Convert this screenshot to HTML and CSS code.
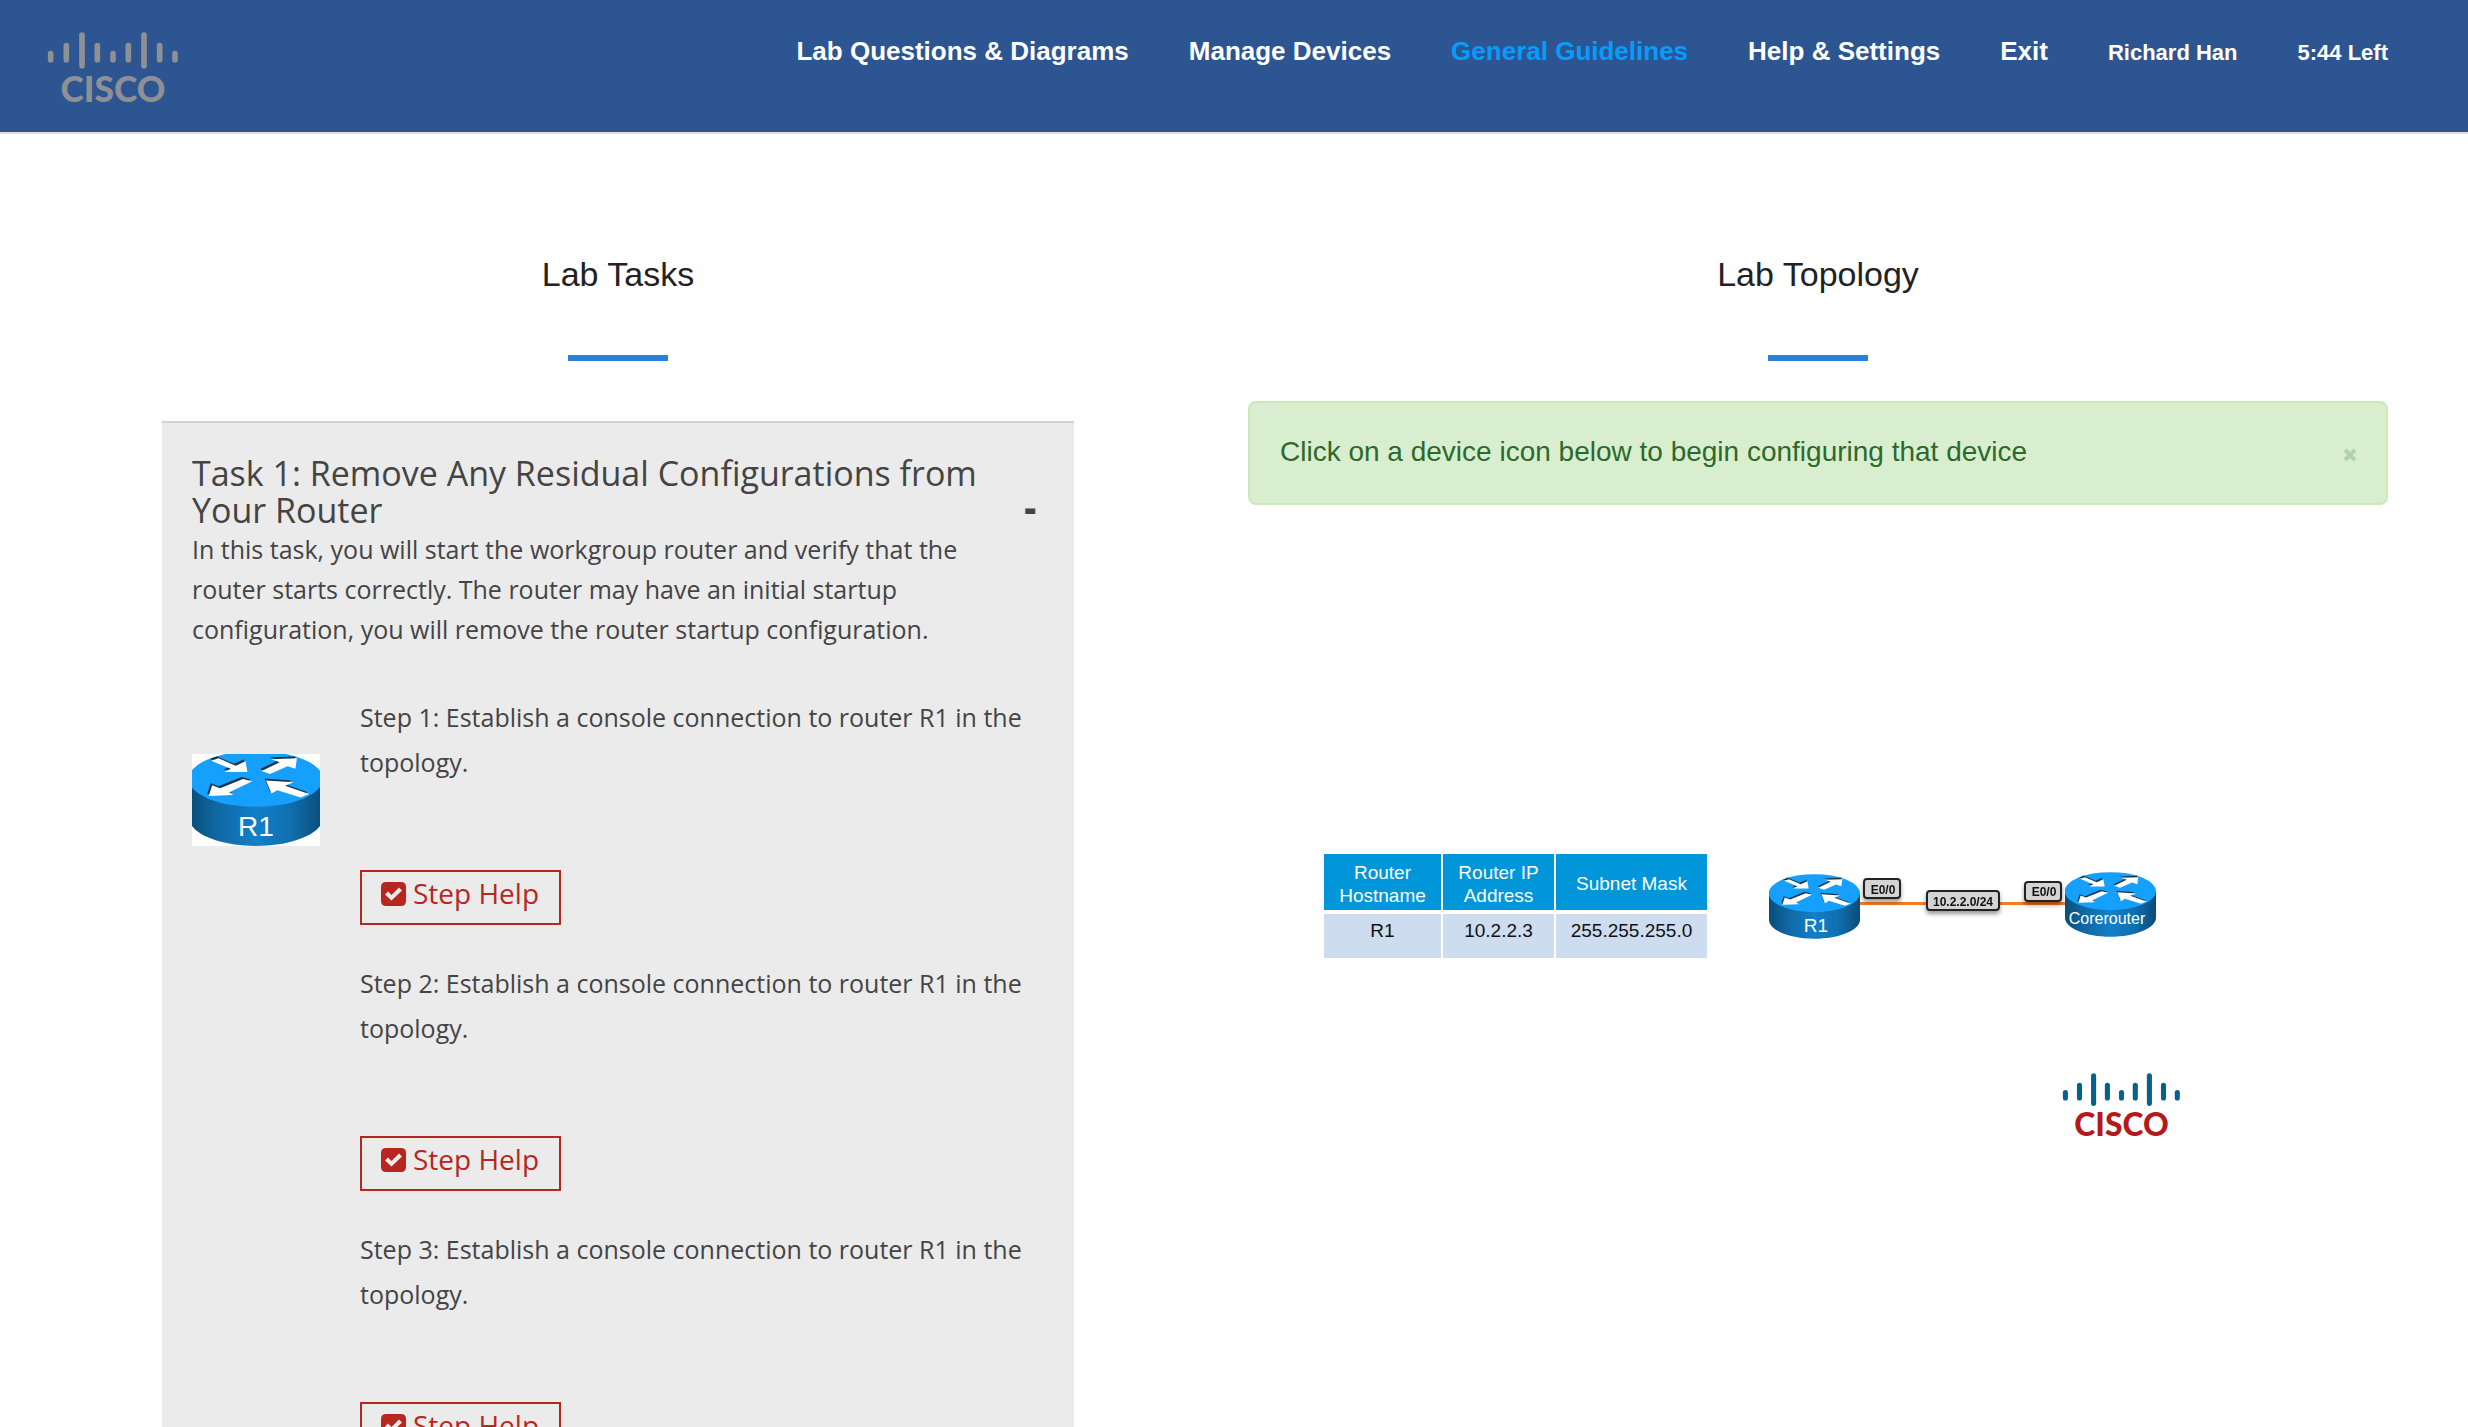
FILE: index.html
```html
<!DOCTYPE html>
<html lang="en">
<head>
<meta charset="utf-8">
<meta name="viewport" content="width=device-width, initial-scale=1">
<title>Lab Tasks</title>
<link rel="stylesheet" href="styles.css">
</head>
<body>
<svg class="defs" aria-hidden="true">
  <defs>
    <linearGradient id="side">
      <stop offset="0" stop-color="#0a4c78"/>
      <stop offset=".2" stop-color="#0f67a2"/>
      <stop offset=".5" stop-color="#127fc9"/>
      <stop offset=".75" stop-color="#1070b0"/>
      <stop offset="1" stop-color="#0a4c78"/>
    </linearGradient>
    <g id="arrows">
      <path d="M45 20 60 15 95 30 115 21 119 43 72 43 85 36Z"/>
      <path d="M148 41 185 23 168 17 220 15 217 36 201 31 165 47Z"/>
      <path d="M110 57 129 62 82 84 90 90 40 92 47 70 63 76Z"/>
      <path d="M157 60 213 64 196 71 245 88 228 95 180 80 168 87Z"/>
    </g>
    <symbol id="router" viewBox="0 0 273 194">
      <path d="M0 57V137C0 168 61 194 136 194S273 168 273 137V57Z" fill="url(#side)"/>
      <ellipse cx="136" cy="57" rx="137" ry="57" fill="#16a0fd"/>
      <use href="#arrows" x="-3" y="-4" fill="#16344b"/>
      <use href="#arrows" fill="#fff"/>
    </symbol>
    <g id="bridge" stroke="currentColor" stroke-width="17" stroke-linecap="round">
      <path d="M8 65V83M55 41V83M102 9V101M148 41V83M195 65V83M241 41V83M288 9V101M335 41V83M381 65V83"/>
    </g>
    <symbol id="check" viewBox="0 0 25 24">
      <path fill-rule="evenodd" d="M5 0H20Q25 0 25 5V19Q25 24 20 24H5Q0 24 0 19V5Q0 0 5 0ZM10.500 18.500 21 8.500 18 5.500 10.500 13 7 9.500 4 12.500Z"/>
    </symbol>
  </defs>
</svg>

<header class="site-header">
  <a class="brand" href="#" aria-label="Cisco home">
    <svg class="logo logo-header" viewBox="0 0 390 213" role="img" aria-label="Cisco">
      <use href="#bridge"/>
      <text class="wordmark" x="195" y="209">CISCO</text>
    </svg>
  </a>
  <nav class="site-nav">
    <a href="#">Lab Questions &amp; Diagrams</a>
    <a href="#">Manage Devices</a>
    <a class="active" href="#">General Guidelines</a>
    <a href="#">Help &amp; Settings</a>
    <a href="#">Exit</a>
    <a class="small" href="#">Richard Han</a>
    <span class="small">5:44 Left</span>
  </nav>
</header>

<main class="lab">
  <section class="tasks">
    <h2 class="section-title">Lab Tasks</h2>
    <article class="task">
      <header class="task-head">
        <h3>Task 1: Remove Any Residual Configurations from Your Router</h3>
        <button class="toggle" type="button" aria-label="Collapse task">-</button>
      </header>
      <p class="intro">In this task, you will start the workgroup router and verify that the router starts correctly. The router may have an initial startup configuration, you will remove the router startup configuration.</p>
      <div class="task-body">
        <svg class="device" viewBox="0 0 128 92" role="img" aria-label="Router R1">
          <rect width="128" height="92" fill="#fff"/>
          <use href="#router" x="-3" y="-3" width="134" height="95"/>
          <text class="device-name" x="64" y="82">R1</text>
        </svg>
        <ol class="steps">
          <li>
            <p>Step 1: Establish a console connection to router R1 in the topology.</p>
            <button class="step-help" type="button"><svg class="check"><use href="#check"/></svg>Step Help</button>
          </li>
          <li>
            <p>Step 2: Establish a console connection to router R1 in the topology.</p>
            <button class="step-help" type="button"><svg class="check"><use href="#check"/></svg>Step Help</button>
          </li>
          <li>
            <p>Step 3: Establish a console connection to router R1 in the topology.</p>
            <button class="step-help" type="button"><svg class="check"><use href="#check"/></svg>Step Help</button>
          </li>
        </ol>
      </div>
    </article>
  </section>

  <section class="topology">
    <h2 class="section-title">Lab Topology</h2>
    <div class="notice" role="status">
      <p>Click on a device icon below to begin configuring that device</p>
      <button class="close" type="button" aria-label="Dismiss">
        <svg viewBox="0 0 14 14"><path d="M2 2 12 12M12 2 2 12"/></svg>
      </button>
    </div>
    <div class="diagram">
      <div class="diagram-row">
        <table class="addresses">
          <colgroup><col class="col-host"><col class="col-ip"><col></colgroup>
          <thead>
            <tr><th>Router Hostname</th><th>Router IP Address</th><th>Subnet Mask</th></tr>
          </thead>
          <tbody>
            <tr><td>R1</td><td>10.2.2.3</td><td>255.255.255.0</td></tr>
          </tbody>
        </table>
        <svg class="network" viewBox="27 16 393 80">
          <path class="wire" d="M115 53.500H330"/>
          <a href="#" aria-label="R1">
            <use href="#router" x="29" y="24" width="91" height="65"/>
            <text class="node-name" x="76" y="82">R1</text>
          </a>
          <a href="#" aria-label="Corerouter">
            <use href="#router" x="325" y="22" width="91" height="65"/>
            <text class="node-name core" x="367" y="74">Corerouter</text>
          </a>
          <g class="tag">
            <rect x="124" y="29" width="36" height="19" rx="3"/>
            <text x="143" y="44">E0/0</text>
          </g>
          <g class="tag">
            <rect x="187" y="41" width="72" height="19" rx="3"/>
            <text x="223" y="56">10.2.2.0/24</text>
          </g>
          <g class="tag">
            <rect x="285" y="32" width="36" height="19" rx="3"/>
            <text x="304" y="46">E0/0</text>
          </g>
        </svg>
      </div>
      <svg class="logo logo-diagram" viewBox="0 0 390 213" role="img" aria-label="Cisco">
        <use href="#bridge"/>
        <text class="wordmark" x="195" y="209">CISCO</text>
      </svg>
    </div>
  </section>
</main>
</body>
</html>
```
FILE: styles.css
```css
* {
  box-sizing: border-box;
}

body {
  margin: 0;
  background: #fff;
  color: #444;
  font-family: "Liberation Sans", Arial, sans-serif;
}

h2,
h3,
p,
ol {
  margin: 0;
  padding: 0;
  font-weight: 400;
}

button {
  border: 0;
  padding: 0;
  background: none;
  color: inherit;
  font: inherit;
  cursor: pointer;
}

.defs {
  position: absolute;
  width: 0;
  height: 0;
}

/* Header */
.site-header {
  display: flex;
  justify-content: space-between;
  align-items: flex-start;
  padding: 32px 80px 29px 48px;
  background: #2c5592;
  border-bottom: 2px solid #ddd;
}

.brand,
.logo {
  display: block;
}

.logo {
  overflow: visible;
}

.logo-header {
  width: 130px;
  height: 71px;
  color: #8f9095;
}

.wordmark {
  font-family: Lato, sans-serif;
  font-size: 106px;
  font-weight: 900;
  text-anchor: middle;
  fill: currentColor;
}

.site-nav {
  display: flex;
  align-items: baseline;
  gap: 60px;
  padding-top: 4px;
  color: #fff;
  font-size: 26px;
  font-weight: 700;
  line-height: 30px;
}

.site-nav a {
  color: inherit;
  text-decoration: none;
}

.site-nav .active {
  color: #059dfd;
}

.site-nav .small {
  font-size: 22px;
}

/* Columns */
.lab {
  display: grid;
  grid-template-columns: 4fr 5fr;
  gap: 174px;
  padding: 120px 80px 0 162px;
}

.section-title {
  color: #222;
  font-size: 34px;
  line-height: 40px;
  text-align: center;
}

.section-title::after {
  content: "";
  display: block;
  width: 100px;
  height: 6px;
  margin: 61px auto 0;
  background: #2683d9;
}

/* Task panel */
.task {
  margin-top: 60px;
  padding: 32px 30px 80px;
  background: #ebebeb;
  border-top: 2px solid #d2d2d2;
  font-family: "Open Sans", sans-serif;
  font-size: 25px;
}

.task-head {
  display: flex;
  align-items: flex-end;
  justify-content: space-between;
  padding-right: 8px;
}

.task-head h3 {
  font-size: 34px;
  line-height: 37px;
}

.toggle {
  padding-bottom: 3px;
  font-size: 36px;
  font-weight: 800;
  line-height: 37px;
}

.intro {
  padding-right: 30px;
  line-height: 40px;
}

.task-body {
  display: grid;
  grid-template-columns: 128px 1fr;
  gap: 40px;
  margin-top: 46px;
  align-items: start;
}

.device {
  width: 128px;
  height: 92px;
  margin-top: 59px;
}

.device-name,
.node-name {
  fill: #fff;
  font-family: "Liberation Sans", Arial, sans-serif;
  font-size: 28px;
  text-anchor: middle;
}

.steps {
  list-style: none;
}

.steps li {
  padding-bottom: 36px;
}

.steps p {
  line-height: 45px;
}

.step-help {
  display: flex;
  align-items: flex-start;
  gap: 7px;
  height: 55px;
  margin-top: 85px;
  padding: 2px 20px 0 19px;
  border: 2px solid #b7271f;
  color: #b7271f;
  font-size: 28px;
  line-height: 38px;
}

.check {
  width: 25px;
  height: 24px;
  margin-top: 8px;
  fill: currentColor;
}

/* Topology */
.notice {
  display: flex;
  justify-content: space-between;
  align-items: center;
  margin-top: 40px;
  padding: 29px 29px 31px 30px;
  background: #d9eecf;
  border: 2px solid #cde7b8;
  border-radius: 8px;
  color: #2b6a2b;
  font-size: 28px;
  line-height: 40px;
}

.close {
  padding-top: 6px;
}

.close svg {
  display: block;
  width: 14px;
  height: 14px;
  fill: none;
  stroke: #b0d2aa;
  stroke-width: 4;
}

.diagram {
  max-width: 932px;
  margin-top: 349px;
  padding-left: 76px;
}

.diagram-row {
  display: flex;
  align-items: center;
  gap: 60px;
}

.addresses {
  border-collapse: collapse;
  table-layout: fixed;
  flex: none;
  width: 383px;
  color: #111;
  font-size: 19px;
  line-height: 23px;
  text-align: center;
}

.col-host {
  width: 118px;
}

.col-ip {
  width: 113px;
}

.addresses th {
  height: 58px;
  padding: 3px 8px 0;
  background: #0096d9;
  border-bottom: 4px solid #fff;
  color: #fff;
  font-weight: 400;
}

.addresses td {
  height: 46px;
  padding: 5px 8px 0;
  background: #cddcee;
  vertical-align: top;
}

.addresses th + th,
.addresses td + td {
  border-left: 2px solid #fff;
}

.network {
  flex: none;
  width: 393px;
  height: 80px;
}

.wire {
  stroke: #f47b20;
  stroke-width: 3;
}

.node-name {
  font-size: 19px;
}

.node-name.core {
  font-size: 16px;
}

.tag {
  filter: drop-shadow(0 3px 2px rgba(0, 0, 0, .4));
}

.tag rect {
  fill: #d4d4d4;
  stroke: #222;
  stroke-width: 2;
}

.tag text {
  fill: #111;
  font-size: 12px;
  font-weight: 700;
  text-anchor: middle;
}

.logo-diagram {
  width: 117px;
  height: 64px;
  margin: 115px 0 0 auto;
  color: #06628c;
}

.logo-diagram .wordmark {
  fill: #b5191c;
}
```
